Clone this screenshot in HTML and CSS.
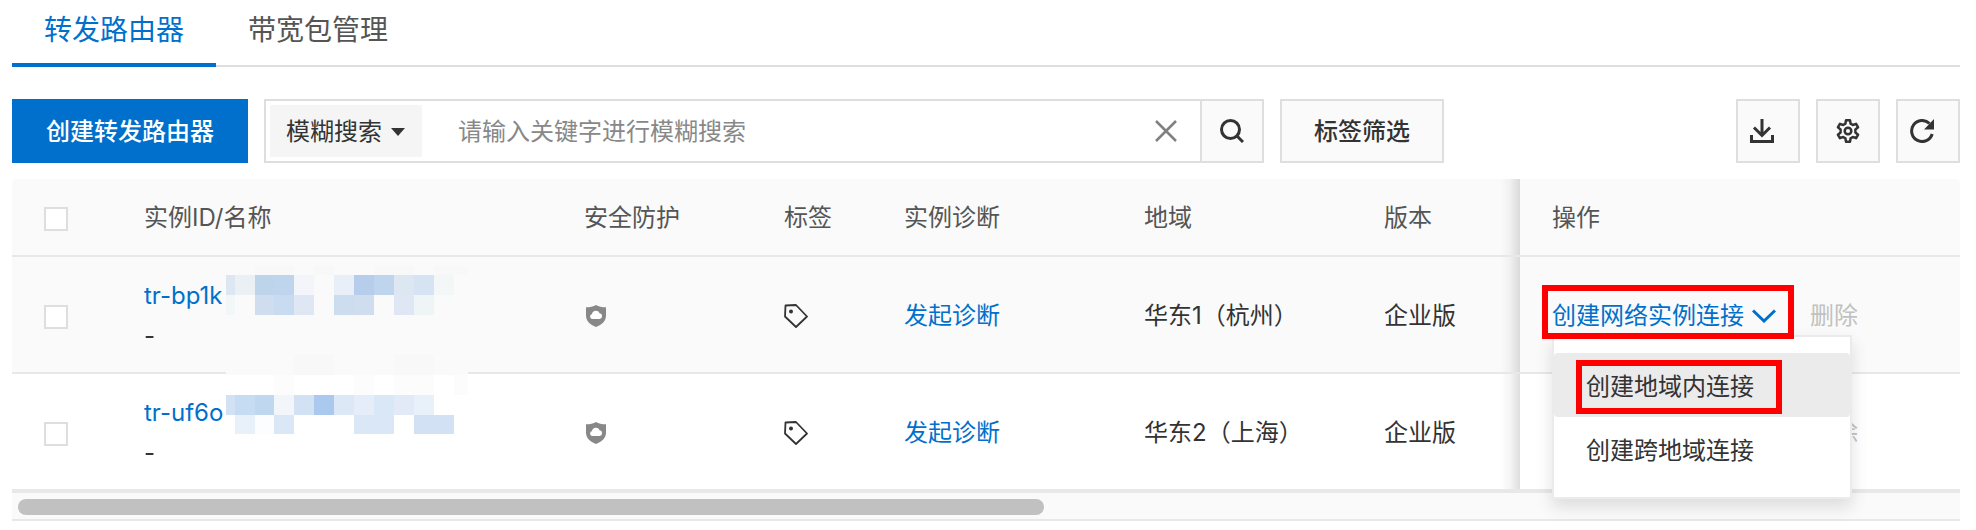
FILE: index.html
```html
<!DOCTYPE html>
<html lang="zh-CN">
<head>
  <meta charset="UTF-8">
  <meta name="viewport" content="width=device-width, initial-scale=1.0">
  <title>转发路由器</title>
  <link rel="stylesheet" href="styles.css">
</head>
<body>
  <!-- Shared icons -->
  <svg class="sprite" aria-hidden="true">
    <symbol id="icon-shield" viewBox="0 0 20 22">
      <path fill="#888" d="M10 0C12.500 1.700 16 2.300 20 2.300v8.200C20 16 16 19.800 10 22 4 19.800 0 16 0 10.500V2.300C4 2.300 7.500 1.700 10 0z"/>
      <path fill="#fff" d="M6.500 14a2.600 2.600 0 0 1-.5-5.100 4 4 0 0 1 7.600-.6A2.900 2.900 0 0 1 13.800 14z"/>
    </symbol>
    <symbol id="icon-tag" viewBox="0 0 24 24">
      <path fill="none" stroke="#333" stroke-width="1.800" stroke-linejoin="round" d="M1.500 1.500L12 1l11 11.500L12 23 1 12.500z"/>
      <circle cx="7" cy="7.500" r="2" fill="#333"/>
    </symbol>
    <symbol id="icon-chevron" viewBox="0 0 24 14">
      <path fill="none" stroke="#0070cc" stroke-width="3" d="M1 1.500l11 10.500 11-10.500"/>
    </symbol>
  </svg>

  <!-- Tabs -->
  <nav class="tabs">
    <a href="#" class="tab active">转发路由器</a>
    <a href="#" class="tab">带宽包管理</a>
  </nav>

  <!-- Toolbar -->
  <div class="toolbar">
    <button type="button" class="btn btn-primary">创建转发路由器</button>
    <form class="search">
      <div class="search-type">
        <select aria-label="搜索方式">
          <option>模糊搜索</option>
        </select>
        <svg width="14" height="8" viewBox="0 0 14 8"><path fill="#333" d="M0 0h14L7 8z"/></svg>
      </div>
      <input type="text" class="search-input" aria-label="关键字" placeholder="请输入关键字进行模糊搜索">
      <button type="button" class="search-clear" aria-label="清空">
        <svg width="22" height="22" viewBox="0 0 22 22"><path stroke="#808080" stroke-width="2.500" d="M1 1l20 20M21 1L1 21"/></svg>
      </button>
      <button type="button" class="search-btn" aria-label="搜索">
        <svg width="24" height="24" viewBox="0 0 24 24" fill="none" stroke="#333" stroke-width="3"><circle cx="10.500" cy="10.500" r="9"/><path d="M16.500 16.500l6.500 6.500"/></svg>
      </button>
    </form>
    <button type="button" class="btn">标签筛选</button>
    <div class="tools">
      <button type="button" class="icon-btn icon-start" aria-label="下载">
        <svg width="24" height="24" viewBox="0 0 24 24" fill="none" stroke="#333" stroke-width="3"><path d="M12 0v16M4 8.500l8 8 8-8M1.500 16v6.500h21V16"/></svg>
      </button>
      <button type="button" class="icon-btn" aria-label="设置">
        <svg width="24" height="24" viewBox="0 0 24 24" fill="none" stroke="#333" stroke-width="2.500" stroke-linejoin="round"><path d="M10 1.300h4l.6 3.400 2.200 1.300 3.300-1.200 2 3.500-2.700 2.200v3l2.700 2.200-2 3.500-3.300-1.200-2.200 1.300-.6 3.400h-4l-.6-3.400L7.200 18l-3.300 1.200-2-3.500 2.700-2.200v-3L1.900 8.300l2-3.500L7.200 6l2.200-1.300z"/><circle cx="12" cy="12" r="3.300"/></svg>
      </button>
      <button type="button" class="icon-btn icon-start" aria-label="刷新">
        <svg width="24" height="24" viewBox="0 0 24 24"><path fill="none" stroke="#333" stroke-width="3" d="M19.500 4.500A10.500 10.500 0 1 0 22.200 15"/><path fill="#333" d="M24 0v10.500H14z"/></svg>
      </button>
    </div>
  </div>

  <!-- Router list -->
  <table class="table">
    <colgroup>
      <col class="col-check">
      <col class="col-id">
      <col class="col-security">
      <col class="col-tag">
      <col class="col-diagnose">
      <col class="col-region">
      <col class="col-version">
      <col class="col-action">
    </colgroup>
    <thead>
      <tr>
        <th><input type="checkbox" class="checkbox" aria-label="全选"></th>
        <th>实例ID/名称</th>
        <th>安全防护</th>
        <th>标签</th>
        <th>实例诊断</th>
        <th>地域</th>
        <th>版本</th>
        <th class="fixed">操作</th>
      </tr>
    </thead>
    <tbody>
      <tr class="hover">
        <td><input type="checkbox" class="checkbox" aria-label="选择 tr-bp1k"></td>
        <td class="id-cell">
          <a href="#">tr-bp1k</a>
          <div>-</div>
          <!-- Masked part of the IDs -->
          <svg class="mask" width="242" height="168" viewBox="0 0 242 168" shape-rendering="crispEdges" aria-hidden="true">
            <path fill="#fafafa" d="M0 0h242v109H0z"/>
            <path fill="#fff" d="M0 109h242v59H0z"/>
            <path fill="#f8f8f8" d="M29 0h39v9H29zM88 0h20v9H88zM148 0h40v9h-40zM208 0h34v9h-34zM68 89h40v20H68zM168 89h40v20h-40z"/>
            <path fill="#fcfcfc" d="M48 109h20v20H48zM128 109h20v20h-20zM168 109h40v20h-40zM228 109h14v20h-14z"/>
            <path fill="#dce7f2" d="M0 9h9v20H0zM168 9h20v20h-20z"/>
            <path fill="#eaf0f4" d="M9 9h20v20H9z"/>
            <path fill="#bdd4eb" d="M29 9h19v20H29z"/>
            <path fill="#bfd4ed" d="M48 9h20v20H48zM148 9h20v20h-20z"/>
            <path fill="#f3f5fa" d="M68 9h20v20H68z"/>
            <path fill="#e9eff8" d="M108 9h20v20h-20z"/>
            <path fill="#b6ceeb" d="M128 9h20v20h-20z"/>
            <path fill="#d5e3f2" d="M188 9h20v20h-20z"/>
            <path fill="#f3f7f8" d="M208 9h20v20h-20zM0 29h9v20H0z"/>
            <path fill="#d0ddee" d="M29 29h19v20H29zM128 29h20v20h-20z"/>
            <path fill="#c9dbf1" d="M48 29h20v20H48z"/>
            <path fill="#dfe6f4" d="M68 29h20v20H68zM168 29h20v20h-20z"/>
            <path fill="#ccddf0" d="M108 29h20v20h-20z"/>
            <path fill="#eff4f7" d="M188 29h20v20h-20z"/>
            <path fill="#d2e1f4" d="M0 129h9v20H0zM68 129h20v20H68zM188 149h40v19h-40z"/>
            <path fill="#c5dcf2" d="M9 129h20v20H9z"/>
            <path fill="#bfd7ef" d="M29 129h19v20H29z"/>
            <path fill="#f2f6fb" d="M48 129h20v20H48z"/>
            <path fill="#abc9ee" d="M88 129h20v20H88z"/>
            <path fill="#dce8f6" d="M108 129h20v20h-20z"/>
            <path fill="#e5edf8" d="M128 129h20v20h-20z"/>
            <path fill="#d9e7f6" d="M148 129h20v20h-20zM48 149h20v19H48zM128 149h40v19h-40z"/>
            <path fill="#e3eaf7" d="M168 129h20v20h-20z"/>
            <path fill="#e8f0f9" d="M188 129h20v20h-20zM9 149h20v19H9z"/>
            <path fill="#fbfdff" d="M29 149h19v19H29z"/>
          </svg>
        </td>
        <td><svg class="icon-shield" width="20" height="22"><use href="#icon-shield"/></svg></td>
        <td><svg width="24" height="24"><use href="#icon-tag"/></svg></td>
        <td><a href="#">发起诊断</a></td>
        <td>华东1（杭州）</td>
        <td>企业版</td>
        <td class="fixed open">
          <div class="actions">
            <a href="#" class="dropdown marked">创建网络实例连接 <svg width="24" height="14"><use href="#icon-chevron"/></svg></a>
            <button type="button" class="link-btn" disabled>删除</button>
          </div>
          <ul class="menu">
            <li><a href="#" class="menu-item active"><span class="marked">创建地域内连接</span></a></li>
            <li><a href="#" class="menu-item">创建跨地域连接</a></li>
          </ul>
        </td>
      </tr>
      <tr>
        <td><input type="checkbox" class="checkbox" aria-label="选择 tr-uf6o"></td>
        <td>
          <a href="#">tr-uf6o</a>
          <div>-</div>
        </td>
        <td><svg class="icon-shield" width="20" height="22"><use href="#icon-shield"/></svg></td>
        <td><svg width="24" height="24"><use href="#icon-tag"/></svg></td>
        <td><a href="#">发起诊断</a></td>
        <td>华东2（上海）</td>
        <td>企业版</td>
        <td class="fixed">
          <div class="actions">
            <a href="#" class="dropdown">创建网络实例连接 <svg width="24" height="14"><use href="#icon-chevron"/></svg></a>
            <button type="button" class="link-btn" disabled>删除</button>
          </div>
        </td>
      </tr>
    </tbody>
  </table>
  <div class="scrollbar">
    <div class="scrollbar-thumb"></div>
  </div>
</body>
</html>
```

FILE: styles.css
```css
/* General styles */
* {
  margin: 0;
  padding: 0;
  box-sizing: border-box;
}
body {
  padding: 0 16px 0 12px;
  font-family: Inter, "Noto Sans CJK SC", sans-serif;
  font-size: 24px;
  line-height: 40px;
  color: #333;
  background-color: #fff;
}
a {
  color: #0070cc;
  text-decoration: none;
}
button,
input,
select {
  font: inherit;
  color: inherit;
}
svg {
  display: block;
}
.sprite {
  position: absolute;
  width: 0;
  height: 0;
}

/* Tabs */
.tabs {
  display: flex;
  border-bottom: 2px solid #dedede;
}
.tab {
  padding: 0 32px 3px;
  margin-bottom: -2px;
  border-bottom: 4px solid transparent;
  font-size: 28px;
  line-height: 60px;
  color: #555;
}
.tab.active {
  color: #0070cc;
  border-bottom-color: #0070cc;
}

/* Toolbar */
.toolbar {
  display: flex;
  gap: 16px;
  margin: 32px 0 16px;
}
.btn {
  height: 64px;
  padding: 2px 32px 0;
  border: 2px solid #dedede;
  background-color: #fafafa;
  font-weight: 500;
  white-space: nowrap;
}
.btn-primary {
  border-color: #0070cc;
  background-color: #0070cc;
  color: #fff;
}
.search {
  display: flex;
  flex: 0 1 1000px;
  height: 64px;
  border: 2px solid #dedede;
}
.search-type {
  display: grid;
  width: 152px;
  margin: 4px;
  background-color: #f5f5f5;
}
.search-type select,
.search-type svg {
  grid-area: 1 / 1;
}
.search-type select {
  padding: 2px 0 0 16px;
  border: none;
  background: none;
  appearance: none;
}
.search-type svg {
  align-self: center;
  justify-self: end;
  margin: 2px 17px 0 0;
  pointer-events: none;
}
.search-input {
  flex: 1;
  min-width: 0;
  padding: 2px 0 0 32px;
  border: none;
  background: none;
  outline: none;
}
.search-input::placeholder {
  color: #888;
}
.search-clear {
  padding: 0 23px;
  border: none;
  background: none;
}
.search-btn {
  display: grid;
  place-items: center;
  width: 62px;
  border: none;
  border-left: 2px solid #dedede;
  background-color: #fafafa;
}
.tools {
  display: flex;
  gap: 16px;
  margin-left: auto;
}
.icon-btn {
  display: grid;
  place-items: center;
  width: 64px;
  height: 64px;
  border: 2px solid #dedede;
  background-color: #fafafa;
}
.icon-start {
  justify-items: start;
  padding-left: 12px;
}

/* Table */
.table {
  width: 100%;
  table-layout: fixed;
  border-spacing: 0;
}
.col-check {
  width: 100px;
}
.col-id {
  width: 440px;
}
.col-security {
  width: 200px;
}
.col-tag {
  width: 120px;
}
.col-diagnose,
.col-region {
  width: 240px;
}
.col-version {
  width: 168px;
}
.table th,
.table td {
  padding: 2px 32px 0;
  border-bottom: 2px solid #e8e8e8;
  text-align: left;
  white-space: nowrap;
}
.table th {
  height: 78px;
  background-color: #fafafa;
  font-weight: normal;
  color: #555;
}
.table th:first-child {
  border-top-left-radius: 4px;
}
.table th:last-child {
  border-top-right-radius: 4px;
}
.table td {
  height: 117px;
}
.hover td {
  background-color: #fafafa;
}
.checkbox {
  display: block;
  width: 24px;
  height: 24px;
  margin-top: 2px;
  border: 2px solid #dedede;
  background-color: #fff;
  appearance: none;
}
.icon-shield {
  margin-left: 2px;
}
.id-cell {
  position: relative;
}
.mask {
  position: absolute;
  top: 9px;
  left: 114px;
}

/* Fixed action column */
.fixed {
  position: relative;
}
.fixed::before {
  content: "";
  position: absolute;
  top: 0;
  bottom: 0;
  left: -20px;
  width: 20px;
  background: linear-gradient(to right, rgba(0, 0, 0, 0), rgba(0, 0, 0, 0.04) 50%, rgba(0, 0, 0, 0.13));
}
.open {
  z-index: 2;
}
.actions {
  display: flex;
  gap: 34px;
}
.dropdown {
  display: flex;
  align-items: center;
  gap: 8px;
}
.link-btn {
  border: none;
  background: none;
  color: #c1c1c1;
}
.menu {
  position: absolute;
  top: 78px;
  left: 32px;
  width: 300px;
  padding: 16px 0;
  border: 2px solid #ebebeb;
  background-color: #fff;
  box-shadow: 0 8px 16px rgba(0, 0, 0, 0.12);
  list-style: none;
}
.menu-item {
  display: block;
  padding: 14px 32px 10px;
  border-radius: 4px;
  color: #333;
}
.menu-item.active {
  background-color: #ebebeb;
}

/* Red highlight boxes */
.marked {
  position: relative;
}
.marked::after {
  content: "";
  position: absolute;
  z-index: 1;
  top: -11px;
  bottom: -3px;
  left: -10px;
  right: -18px;
  border: 6px solid #f00;
}
.menu .marked {
  display: block;
  width: fit-content;
}
.menu .marked::after {
  top: -7px;
  bottom: -7px;
  right: -28px;
}

/* Horizontal scrollbar */
.scrollbar {
  padding: 6px;
  height: 30px;
  border-top: 2px solid #e8e8e8;
  border-bottom: 2px solid #e8e8e8;
  background-color: #fafafa;
}
.scrollbar-thumb {
  width: 53%;
  height: 16px;
  border-radius: 8px;
  background-color: #c1c1c1;
}
```
